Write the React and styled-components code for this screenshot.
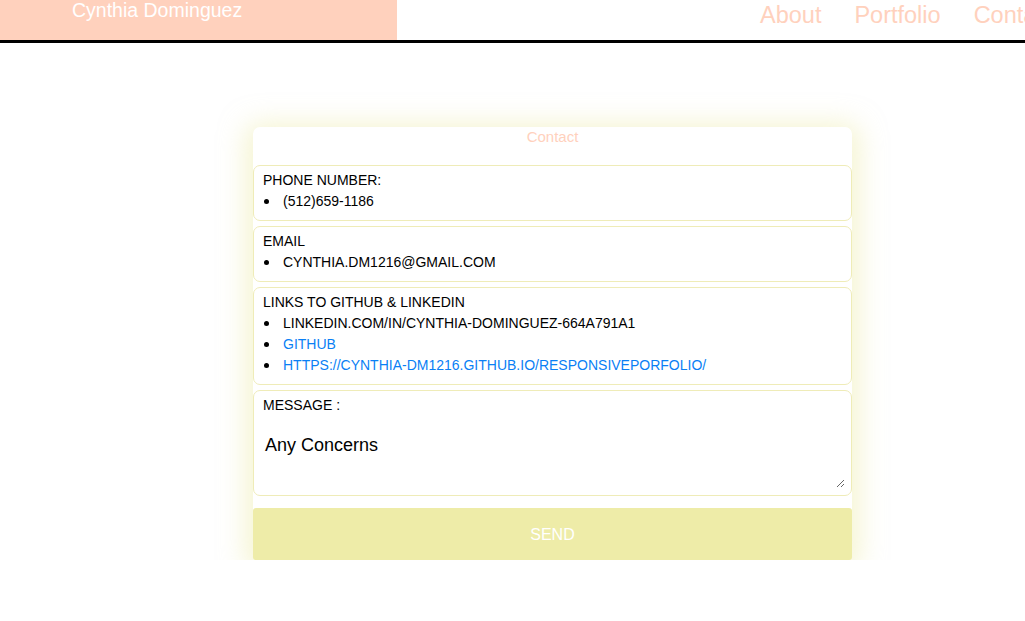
import React from "react";
import styled, { createGlobalStyle } from "styled-components";

const Global = createGlobalStyle`
  html, body { margin: 0; padding: 0; background: #fff; overflow: hidden; }
  body { font-family: "Liberation Sans", Arial, Helvetica, sans-serif; }
`;

const Header = styled.header`
  display: flex;
  align-items: stretch;
  height: 40px;
  border-bottom: 3px solid #000;
  overflow: hidden;
  white-space: nowrap;
`;

const Brand = styled.div`
  flex: 0 0 397px;
  background: #ffd1bd;
  color: #fff;
  font-size: 19.5px;
  line-height: 20px;
  padding-left: 72px;
  box-sizing: border-box;
`;

const Nav = styled.nav`
  flex: 1;
  display: flex;
  gap: 33px;
  padding-left: 363px;
  padding-top: 2px;
`;

const NavLink = styled.a`
  color: #ffd1bd;
  font-size: 23.5px;
  line-height: 26px;
  text-decoration: none;
`;

const Main = styled.main`
  padding: 84px 0 0 253px;
`;

const Card = styled.form`
  width: 599px;
  box-sizing: border-box;
  border-radius: 7px;
  background: #fff;
  box-shadow: 0 4px 26px 8px rgba(238, 236, 168, 0.5);
  display: flex;
  flex-direction: column;
  gap: 5px;
`;

const Title = styled.div`
  text-align: center;
  color: #ffd1bd;
  font-size: 15px;
  line-height: 18px;
  height: 32px;
  padding-top: 1px;
`;

const Section = styled.div`
  border: 1px solid #efecb8;
  border-radius: 7px;
  padding: 4px 9px 8px;
  font-size: 14px;
  line-height: 21px;
  color: #000;
`;

const Label = styled.div``;

const List = styled.ul`
  margin: 0;
  padding-left: 20px;
  list-style: none;
`;

const Item = styled.li`
  height: 21px;
  &::before {
    content: "";
    display: inline-block;
    width: 5px;
    height: 5px;
    border-radius: 50%;
    background: #000;
    margin-left: -19px;
    margin-right: 14px;
    vertical-align: 2px;
  }
`;

const Link = styled.a`
  color: #0a7ff5;
  text-decoration: none;
`;

const MessageBox = styled(Section)`
  padding: 4px 6px 7px 9px;
`;

const TextArea = styled.textarea`
  display: block;
  width: 100%;
  box-sizing: border-box;
  height: 70px;
  margin-top: 2px;
  border: none;
  outline: none;
  resize: vertical;
  font-family: "Liberation Sans", Arial, Helvetica, sans-serif;
  font-size: 18px;
  line-height: 22px;
  color: #000;
  padding: 16px 2px 0;
  &::placeholder { color: #000; }
`;

const Button = styled.button`
  margin-top: 7px;
  height: 52px;
  border: none;
  border-radius: 3px;
  background: #eeeca8;
  color: #fff;
  font-family: "Liberation Sans", Arial, Helvetica, sans-serif;
  font-size: 16px;
  padding-top: 2px;
  cursor: pointer;
`;

export default function App() {
  return (
    <>
      <Global />
      <Header>
        <Brand>Cynthia Dominguez</Brand>
        <Nav>
          <NavLink href="#">About</NavLink>
          <NavLink href="#">Portfolio</NavLink>
          <NavLink href="#">Contact</NavLink>
        </Nav>
      </Header>
      <Main>
        <Card onSubmit={(e) => e.preventDefault()}>
          <Title>Contact</Title>
          <Section>
            <Label>PHONE NUMBER:</Label>
            <List>
              <Item>(512)659-1186</Item>
            </List>
          </Section>
          <Section>
            <Label>EMAIL</Label>
            <List>
              <Item>CYNTHIA.DM1216@GMAIL.COM</Item>
            </List>
          </Section>
          <Section>
            <Label>LINKS TO GITHUB &amp; LINKEDIN</Label>
            <List>
              <Item>LINKEDIN.COM/IN/CYNTHIA-DOMINGUEZ-664A791A1</Item>
              <Item><Link href="#">GITHUB</Link></Item>
              <Item><Link href="#">HTTPS://CYNTHIA-DM1216.GITHUB.IO/RESPONSIVEPORFOLIO/</Link></Item>
            </List>
          </Section>
          <MessageBox>
            <Label>MESSAGE :</Label>
            <TextArea placeholder="Any Concerns" />
          </MessageBox>
          <Button type="submit">SEND</Button>
        </Card>
      </Main>
    </>
  );
}
